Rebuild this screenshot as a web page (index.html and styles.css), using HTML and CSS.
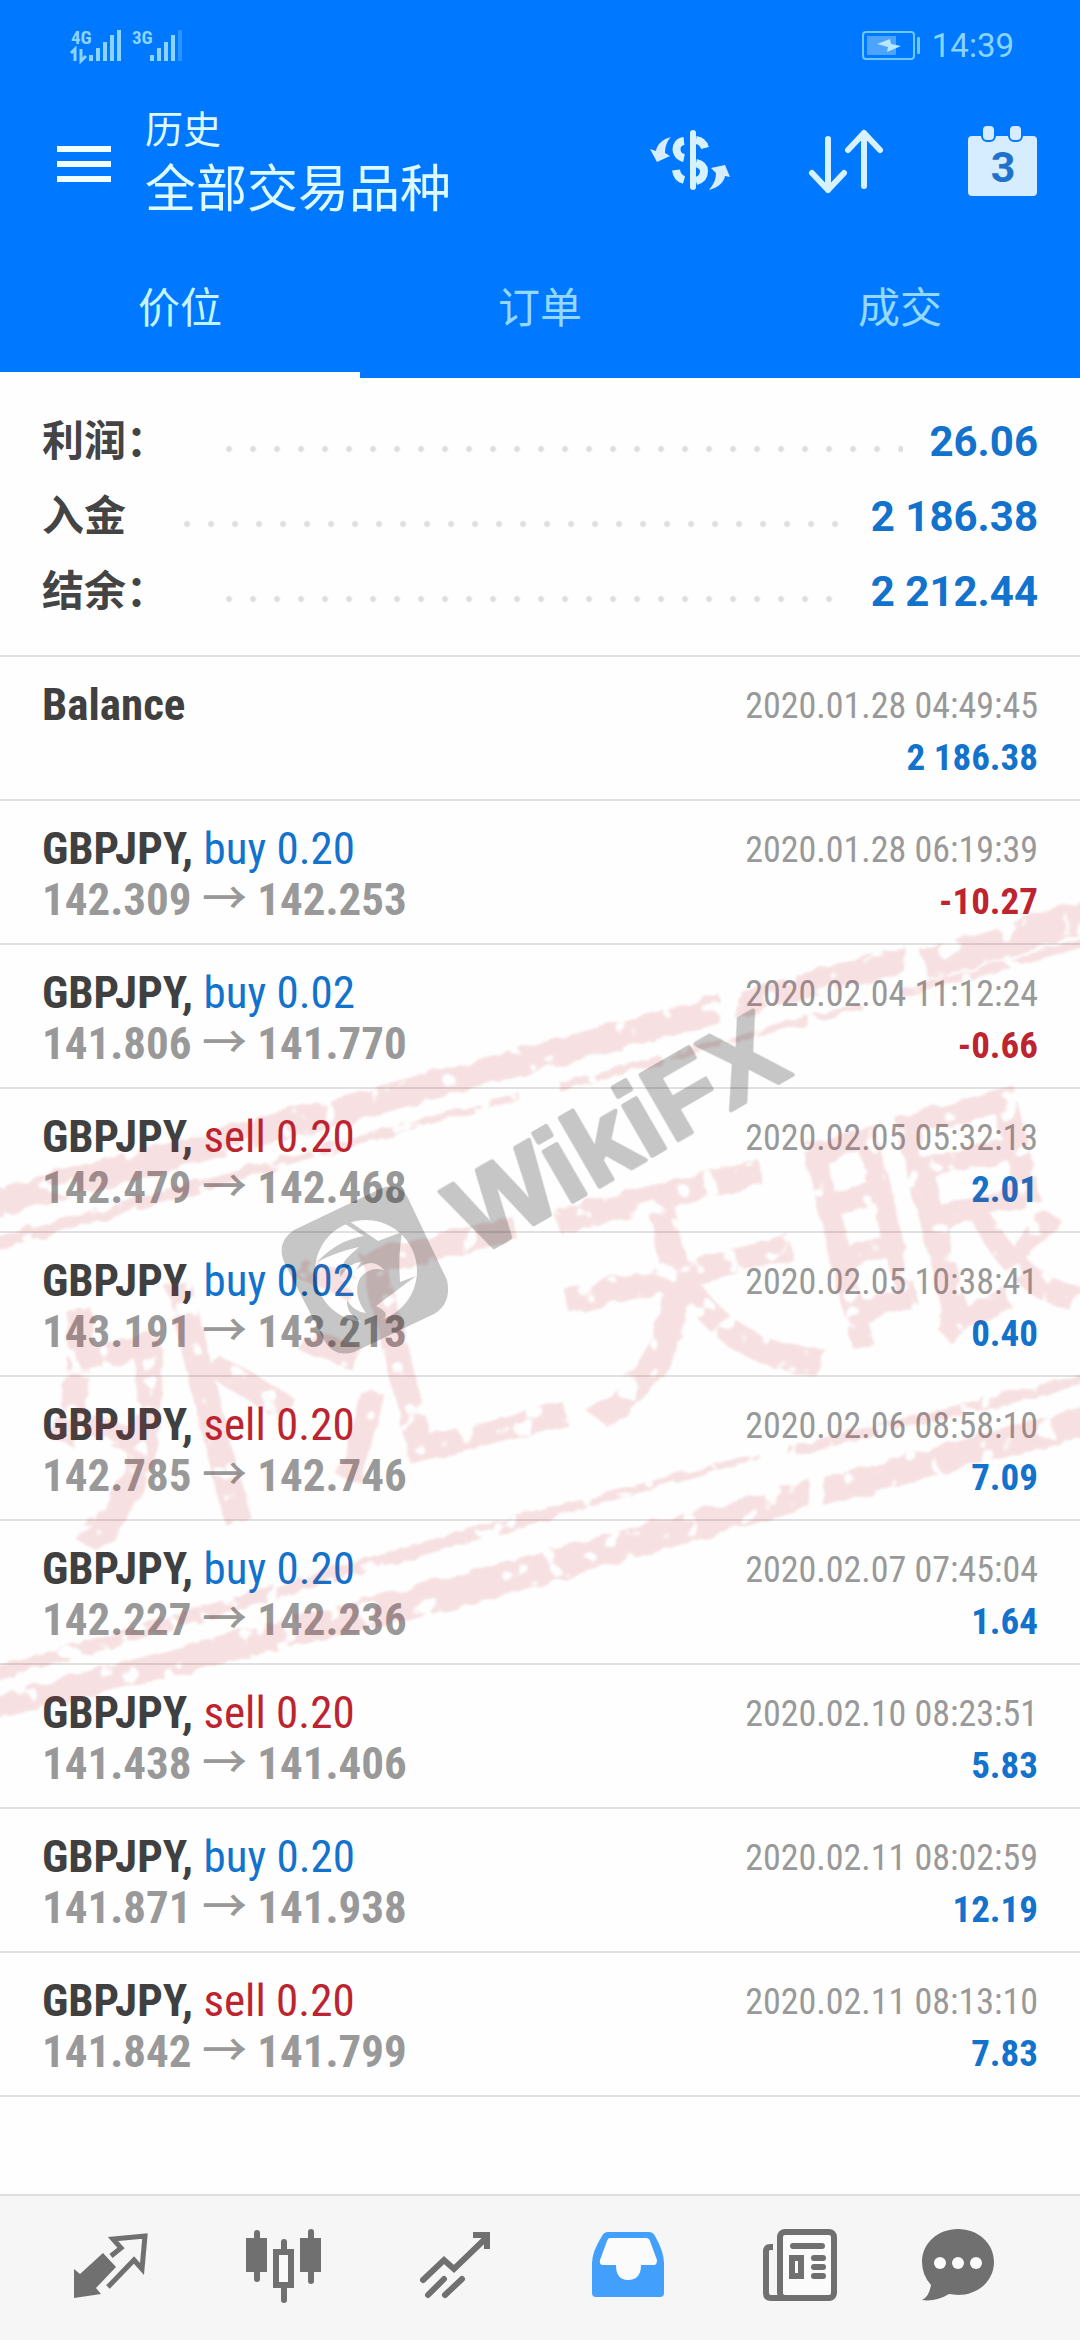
FILE: index.html
```
<!DOCTYPE html>
<html lang="zh-CN">
<head>
    <meta charset="utf-8">
    <meta name="viewport" content="width=device-width, initial-scale=1">
    <title>历史</title>
    <link rel="stylesheet" href="styles.css">
</head>
<body>
    <header class="header">
        <div class="statusbar">
            <svg class="signal" viewBox="0 0 120 40">
                <text x="3" y="18">4G</text>
                <text x="64" y="18">3G</text>
                <path d="M3 27l4-4v12M13 23v12l5-5"/>
                <path class="bars" d="M23 29v6M30 22v13M37 16v19M44 9v26M51 4v31M84 29v6M91 22v13M98 16v19M105 9v26"/>
                <path class="bars faded" d="M112 4v31"/>
            </svg>
            <div class="statusbar-right">
                <svg class="battery" viewBox="0 0 60 30">
                    <rect class="shell" x="1" y="1" width="51" height="27" rx="3"/>
                    <rect class="level" x="5" y="5" width="29" height="19"/>
                    <path class="bolt" d="M15 13l13-5 1 5 10 2-14 6 1-5z"/>
                    <rect class="nub" x="55" y="6" width="3" height="17" rx="1"/>
                </svg>
                <span class="time">14:39</span>
            </div>
        </div>

        <div class="toolbar">
            <button class="icon-btn" aria-label="菜单">
                <svg class="menu-icon" viewBox="0 0 54 36"><path d="M0 3h54M0 18h54M0 33h54"/></svg>
            </button>
            <div class="titles">
                <p class="subtitle">历史</p>
                <h1 class="title">全部交易品种</h1>
            </div>
            <div class="actions">
                <button class="icon-btn" aria-label="货币">
                    <svg class="tool-icon" viewBox="0 4 80 80">
                        <path class="fill" d="M21 17C13 19 7 24 6 31L0 29L7 42L20 36L15 33C15 27 17 21 21 17z"/>
                        <path class="fill" d="M59 70C67 68 74 63 75 56L80 57L75 45L61 48L66 53C66 60 63 65 59 70z"/>
                        <path class="line thick" d="M34 21C24 22 24 36 34 38M46 20Q53 21 55 28M46 43Q54 45 54 51Q54 59 46 61M26 50Q27 58 34 60"/>
                        <path class="line" d="M43 13v54"/>
                    </svg>
                </button>
                <button class="icon-btn" aria-label="排序">
                    <svg class="tool-icon" viewBox="0 4 80 80">
                        <path class="line" d="M22 19v51M6 53l16 17 16-17M58 66V13M42 30l16-17 16 17"/>
                    </svg>
                </button>
                <button class="icon-btn" aria-label="日期">
                    <svg class="tool-icon" viewBox="0 4 80 80">
                        <rect class="fill" x="6" y="16" width="69" height="60" rx="4"/>
                        <rect class="ring" x="20" y="5" width="13" height="16" rx="5"/>
                        <rect class="ring" x="47" y="5" width="13" height="16" rx="5"/>
                        <text class="day" x="41" y="62">3</text>
                    </svg>
                </button>
            </div>
        </div>

        <nav class="tabs">
            <button class="tab active">价位</button>
            <button class="tab">订单</button>
            <button class="tab">成交</button>
        </nav>
    </header>

    <main class="content">
        <dl class="summary">
            <div class="summary-row"><dt>利润：</dt><dd>26.06</dd></div>
            <div class="summary-row"><dt>入金</dt><dd>2 186.38</dd></div>
            <div class="summary-row"><dt>结余：</dt><dd>2 212.44</dd></div>
        </dl>

        <ul class="deals">
            <li class="deal">
                <div class="left"><p class="symbol">Balance</p></div>
                <div class="right"><p class="date">2020.01.28 04:49:45</p><p class="profit">2 186.38</p></div>
            </li>
            <li class="deal">
                <div class="left"><p class="symbol">GBPJPY, <span class="buy">buy 0.20</span></p><p class="price">142.309 <span class="arrow">→</span> 142.253</p></div>
                <div class="right"><p class="date">2020.01.28 06:19:39</p><p class="profit loss">-10.27</p></div>
            </li>
            <li class="deal">
                <div class="left"><p class="symbol">GBPJPY, <span class="buy">buy 0.02</span></p><p class="price">141.806 <span class="arrow">→</span> 141.770</p></div>
                <div class="right"><p class="date">2020.02.04 11:12:24</p><p class="profit loss">-0.66</p></div>
            </li>
            <li class="deal">
                <div class="left"><p class="symbol">GBPJPY, <span class="sell">sell 0.20</span></p><p class="price">142.479 <span class="arrow">→</span> 142.468</p></div>
                <div class="right"><p class="date">2020.02.05 05:32:13</p><p class="profit">2.01</p></div>
            </li>
            <li class="deal">
                <div class="left"><p class="symbol">GBPJPY, <span class="buy">buy 0.02</span></p><p class="price">143.191 <span class="arrow">→</span> 143.213</p></div>
                <div class="right"><p class="date">2020.02.05 10:38:41</p><p class="profit">0.40</p></div>
            </li>
            <li class="deal">
                <div class="left"><p class="symbol">GBPJPY, <span class="sell">sell 0.20</span></p><p class="price">142.785 <span class="arrow">→</span> 142.746</p></div>
                <div class="right"><p class="date">2020.02.06 08:58:10</p><p class="profit">7.09</p></div>
            </li>
            <li class="deal">
                <div class="left"><p class="symbol">GBPJPY, <span class="buy">buy 0.20</span></p><p class="price">142.227 <span class="arrow">→</span> 142.236</p></div>
                <div class="right"><p class="date">2020.02.07 07:45:04</p><p class="profit">1.64</p></div>
            </li>
            <li class="deal">
                <div class="left"><p class="symbol">GBPJPY, <span class="sell">sell 0.20</span></p><p class="price">141.438 <span class="arrow">→</span> 141.406</p></div>
                <div class="right"><p class="date">2020.02.10 08:23:51</p><p class="profit">5.83</p></div>
            </li>
            <li class="deal">
                <div class="left"><p class="symbol">GBPJPY, <span class="buy">buy 0.20</span></p><p class="price">141.871 <span class="arrow">→</span> 141.938</p></div>
                <div class="right"><p class="date">2020.02.11 08:02:59</p><p class="profit">12.19</p></div>
            </li>
            <li class="deal">
                <div class="left"><p class="symbol">GBPJPY, <span class="sell">sell 0.20</span></p><p class="price">141.842 <span class="arrow">→</span> 141.799</p></div>
                <div class="right"><p class="date">2020.02.11 08:13:10</p><p class="profit">7.83</p></div>
            </li>
        </ul>

        <svg class="watermark" viewBox="0 880 1080 880" aria-hidden="true">
            <defs>
                <!-- worn ink: ragged edges, then small holes -->
                <filter id="rough" x="-5%" y="-5%" width="110%" height="110%">
                    <feTurbulence type="fractalNoise" baseFrequency="0.05" numOctaves="2" seed="4" result="noise"/>
                    <feDisplacementMap in="SourceGraphic" in2="noise" scale="10" result="edge"/>
                    <feColorMatrix in="noise" type="matrix" values="0 0 0 0 0  0 0 0 0 0  0 0 0 0 0  -14 0 0 0 9.6" result="holes"/>
                    <feComposite in="edge" in2="holes" operator="in"/>
                    <feGaussianBlur stdDeviation="1"/>
                </filter>
            </defs>
            <g class="stamp" filter="url(#rough)">
                <path d="M-20 1192L720 995V1022L-20 1222zM740 991L905 945V972L735 1018zM920 950L1100 895V930L930 980z"/>
                <path d="M-20 1240L520 1092V1098L-20 1256zM560 1082L860 1003V1008L560 1092zM900 990L1100 934V944L900 998z"/>
                <path d="M-20 1672L400 1548 760 1452V1458L400 1562 -20 1686zM790 1446L1100 1370V1382L790 1456z"/>
                <path d="M-20 1700L480 1568 810 1480V1508L480 1602 -20 1722zM824 1478L1100 1402V1432L824 1506z"/>
                <text transform="translate(160 1425) rotate(-14)" x="-120" y="90">外汇天眼</text>
            </g>
            <g class="wikifx">
                <path fill-rule="evenodd" d="M294 1230L382 1188Q398 1182 407 1196L447 1280Q452 1303 434 1314L354 1352Q334 1358 324 1340L284 1262Q276 1242 294 1230zM366 1220A51 51 0 1 0 366 1322A51 51 0 1 0 366 1220z"/>
                <path d="M317 1262Q338 1240 364 1236L345 1224L349 1221L378 1241L402 1232Q398 1256 400 1282L416 1276L376 1306Q400 1318 366 1324Q346 1316 347 1300Q354 1312 366 1313Q352 1294 360 1278Q370 1266 384 1270Q372 1256 356 1270L361 1262Q350 1262 340 1277Q340 1264 350 1255L359 1247Q336 1252 317 1262z"/>
                <text transform="translate(477 1257) rotate(-30)">WikiFX</text>
            </g>
        </svg>
    </main>

    <nav class="bottom-nav">
        <button class="nav-btn" aria-label="行情">
            <svg viewBox="0 0 76 76">
                <path class="solid" d="M2 42l6 5 23-21 13 14-20 21 5 6-27 4z"/>
                <path class="stroke thin" d="M39 29l10-8-8-9 32-3-3 33-8-9-26 27"/>
            </svg>
        </button>
        <button class="nav-btn" aria-label="图表">
            <svg viewBox="0 0 76 76">
                <path class="solid" d="M1 11h21v34H1zM55 11h21v34H55z"/>
                <path class="stroke round" d="M12 6v46M66 5v49M39 15v8M39 60v13"/>
                <rect class="box" x="31" y="25" width="15" height="33"/>
            </svg>
        </button>
        <button class="nav-btn" aria-label="交易">
            <svg viewBox="0 0 76 76">
                <path class="stroke round" d="M6 53l21-20 10 9 30-29M11 68l16-16M28 68l17-16"/>
                <path class="stroke" d="M56 8h14v14"/>
            </svg>
        </button>
        <button class="nav-btn active" aria-label="历史">
            <svg viewBox="0 0 76 76">
                <path class="solid" d="M18 5H59Q63 5 65 9Q74 25 74 36V66Q74 70 70 70H6Q2 70 2 66V36Q2 25 12 9Q14 5 18 5z"/>
                <path class="hole" d="M20 11H56Q59 11 60 14L67 33Q67 38 64 38H51Q51 53 38 53Q26 53 26 38H13Q9 38 10 33L17 14Q18 11 20 11z"/>
            </svg>
        </button>
        <button class="nav-btn" aria-label="新闻">
            <svg viewBox="0 0 76 76">
                <rect class="box" x="18" y="5" width="54" height="66" rx="5"/>
                <path class="stroke" d="M11 20H8Q4 20 4 25V66Q4 71 9 71H22"/>
                <path class="stroke round" d="M31 19h29M52 31h9M52 40h9M52 49h9"/>
                <rect class="box" x="30" y="31" width="9" height="18"/>
            </svg>
        </button>
        <button class="nav-btn" aria-label="消息">
            <svg viewBox="0 0 76 76">
                <path class="solid" d="M38 2C58 2 74 16 74 35S58 68 38 68L29 67Q16 75 2 73Q9 70 11 58Q2 48 2 35C2 16 18 2 38 2z"/>
                <circle class="hole" cx="20" cy="36" r="6"/>
                <circle class="hole" cx="38" cy="36" r="6"/>
                <circle class="hole" cx="56" cy="36" r="6"/>
            </svg>
        </button>
    </nav>
</body>
</html>
```
FILE: styles.css
```
* {
    box-sizing: border-box;
    margin: 0;
    padding: 0;
}
body {
    display: flex;
    flex-direction: column;
    min-height: 100vh;
    font-family: Roboto, "Noto Sans CJK SC", sans-serif;
    background-color: #fefefe;
}
button {
    background: none;
    border: none;
    font-family: inherit;
    cursor: pointer;
}
svg {
    display: block;
}

/* header */
.header {
    background-color: #0078ff;
    color: #dcfaff;
}
.statusbar {
    display: flex;
    justify-content: space-between;
    align-items: flex-start;
    height: 104px;
    padding: 26px 66px 0 68px;
    color: #8ad4ff;
}
.signal {
    width: 120px;
    height: 40px;
    fill: none;
    stroke: #8ad4ff;
    stroke-width: 3;
}
.signal text {
    font-family: "Roboto Condensed", Roboto, sans-serif;
    font-size: 19px;
    font-weight: bold;
    fill: #8ad4ff;
    stroke: none;
}
.bars {
    stroke-width: 4;
}
.faded {
    opacity: 0.3;
}
.statusbar-right {
    display: flex;
    align-items: center;
    gap: 10px;
}
.battery {
    width: 60px;
    height: 30px;
}
.shell {
    fill: none;
    stroke: #6cc6ff;
    stroke-width: 2;
}
.level {
    fill: #4da4ff;
}
.bolt {
    fill: #b8e8ff;
}
.nub {
    fill: #6cc6ff;
}
.time {
    font-size: 33px;
    line-height: 40px;
}
.toolbar {
    display: flex;
    align-items: center;
    padding: 0 38px 14px 57px;
}
.menu-icon {
    width: 54px;
    height: 36px;
    stroke: #f2ffff;
    stroke-width: 6;
}
.titles {
    flex: 1;
    margin-left: 34px;
}
.subtitle {
    font-size: 38px;
    line-height: 52px;
}
.title {
    font-size: 51px;
    font-weight: normal;
    line-height: 68px;
}
.actions {
    display: flex;
    gap: 76px;
}
.tool-icon {
    width: 80px;
    height: 80px;
}
.fill {
    fill: #d6ecff;
}
.line {
    fill: none;
    stroke: #d6f2ff;
    stroke-width: 6;
    stroke-linecap: round;
    stroke-linejoin: round;
}
.thick {
    stroke-width: 8;
    stroke-linecap: butt;
}
.ring {
    fill: #d6ecff;
    stroke: #0078ff;
    stroke-width: 2;
}
.day {
    font-size: 43px;
    font-weight: bold;
    text-anchor: middle;
    fill: #1f72cc;
}
.tabs {
    display: grid;
    grid-template-columns: repeat(3, 1fr);
}
.tab {
    height: 140px;
    padding-bottom: 2px;
    border-bottom: 6px solid transparent;
    font-size: 42px;
    color: #93d8ff;
}
.tab.active {
    color: #c4f4ff;
    border-bottom-color: #fefefe;
}

/* totals */
.content {
    position: relative;
}
.summary {
    padding: 26px 42px;
    border-bottom: 2px solid #e0e0e0;
}
.summary-row {
    display: flex;
    font-size: 42px;
    font-weight: bold;
    line-height: 75px;
}
.summary-row dt {
    display: flex;
    flex: 1;
    color: #444;
}
.summary-row dt::after {
    content: "";
    flex: 1;
    margin: 0 26px 0 58px;
    background: radial-gradient(circle at 3px 45px, #dedede 2px, transparent 4px) repeat-x;
    background-size: 24px 75px;
}
.summary-row dd {
    color: #1272cc;
}

/* deals list */
.deals {
    list-style: none;
    font-family: "Roboto Condensed", Roboto, "Noto Sans CJK SC", sans-serif;
}
.deal {
    display: flex;
    justify-content: space-between;
    height: 144px;
    padding: 22px 42px 0;
    border-bottom: 2px solid #e0e0e0;
    line-height: 51px;
}
.symbol,
.price {
    font-size: 45px;
    font-weight: bold;
}
.symbol {
    color: #404040;
}
.buy,
.sell {
    font-weight: normal;
}
.buy {
    color: #1272cc;
}
.sell {
    color: #bc2430;
}
.price {
    color: #999;
}
.arrow {
    font-weight: 500;
}
.right {
    padding-top: 2px;
    text-align: right;
}
.date {
    font-size: 36px;
    color: #999;
}
.profit {
    font-size: 37px;
    font-weight: bold;
    color: #1272cc;
}
.loss {
    color: #bc2430;
}

/* stamp and logo over the list */
.watermark {
    position: absolute;
    top: 502px;
    left: 0;
    width: 100%;
    pointer-events: none;
}
.stamp {
    fill: #c8202c;
    opacity: 0.13;
}
.stamp text {
    font-family: "Noto Sans CJK SC", sans-serif;
    font-size: 264px;
    font-weight: 500;
}
.wikifx {
    opacity: 0.22;
}
.wikifx text {
    font-family: "Liberation Sans", sans-serif;
    font-size: 110px;
    font-weight: bold;
    stroke: #000;
    stroke-width: 4;
    stroke-linejoin: round;
}

/* bottom navigation */
.bottom-nav {
    display: grid;
    grid-template-columns: repeat(5, 6fr) 5fr;
    height: 146px;
    margin-top: auto;
    padding: 0 50px 6px 24px;
    background-color: #f6f6f6;
    border-top: 2px solid #dedede;
}
.nav-btn {
    display: flex;
    align-items: center;
    justify-content: center;
    color: #707070;
}
.nav-btn.active {
    color: #429ffb;
}
.nav-btn svg {
    width: 76px;
    height: 76px;
}
.solid {
    fill: currentColor;
}
.hole {
    fill: #fbfbfb;
}
.stroke {
    fill: none;
    stroke: currentColor;
    stroke-width: 6;
}
.thin {
    stroke-width: 5;
}
.round {
    stroke-linecap: round;
}
.box {
    fill: #fbfbfb;
    stroke: currentColor;
    stroke-width: 6;
}
```
